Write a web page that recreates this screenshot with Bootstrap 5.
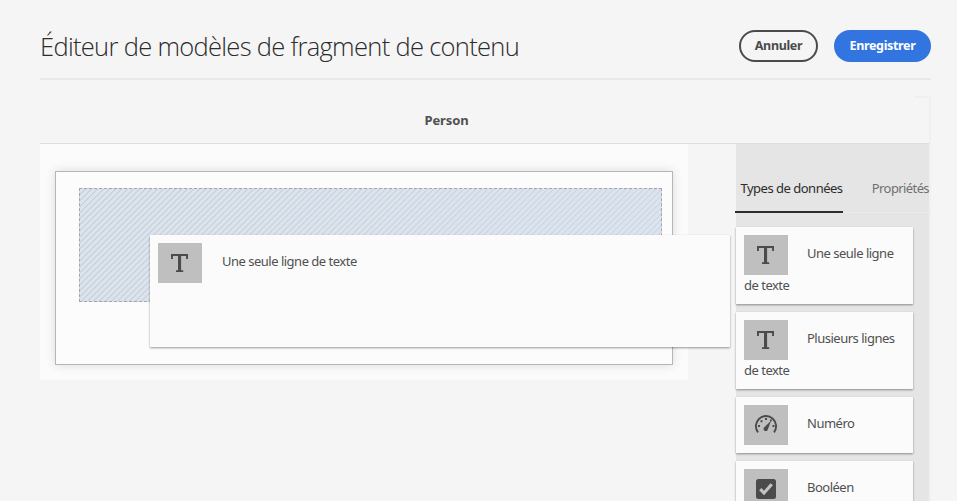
<!DOCTYPE html>
<html lang="fr">
<head>
<meta charset="utf-8">
<meta name="viewport" content="width=device-width, initial-scale=1">
<title>Éditeur de modèles de fragment de contenu</title>
<link href="https://cdn.jsdelivr.net/npm/bootstrap@5.3.0/dist/css/bootstrap.min.css" rel="stylesheet">
<style>
  body { background: #f5f5f5; color: #505050; font: 13px/20px "Noto Sans", "Open Sans", sans-serif; height: 501px; }
  .editor { width: 891px; height: 501px; margin-left: 40px; }
  .editor-header { height: 80px; padding-top: 14px; border-bottom: 2px solid #e9e9e9; }
  .editor-title { font-family: "Open Sans", "Noto Sans", sans-serif; font-size: 25.5px; font-weight: 300; line-height: 36px; color: #2c2c2c; letter-spacing: -.69px; }
  .btn-pill { height: 32px; border: 2px solid #4b4b4b; border-radius: 16px; font: 700 12.5px/28px "Noto Sans", sans-serif; letter-spacing: -.35px; color: #4b4b4b; padding: 0 0 2px; }
  .btn-cancel { width: 79px; }
  .btn-save { width: 97px; background: #3375e0; border-color: #3375e0; color: #fff; }
  .corner-rule { width: 17px; height: 2px; background: #f0f0f0; margin-top: 16px; }
  .work-area { border-right: 2px solid #f0f0f0; }
  .model-name { height: 46px; border-bottom: 1px solid #dedede; padding-right: 76px; font-weight: 700; line-height: 45px; letter-spacing: -.1px; }
  .canvas { width: 648px; height: 236px; background: #fbfbfb; padding: 27px 15px 15px; }
  .fragment { height: 194px; border: 1px solid #b5b5b5; background: #fcfcfc; padding: 16px 10px 0 23px; box-shadow: 0 0 10px rgba(0,0,0,.13); }
  .drop-zone { height: 114px; border: 1px dashed #a6a6a6; background: linear-gradient(135deg, #ced0d3 0 8.33%, #d9e4f0 8.34% 41.66%, #ced0d3 41.67% 58.33%, #d9e4f0 58.34% 91.66%, #ced0d3 91.67%) 0 0 / 6px 6px; }
  .tile { background: #fbfbfb; padding: 8px; box-shadow: 0 1px 2px rgba(0,0,0,.4); }
  .dragged { left: 70px; top: 46px; width: 580px; height: 112px; }
  .tile-icon { width: 44px; height: 40px; background: #bfbfbf; }
  .tile-icon svg { display: block; }
  .tile-label { margin-left: 20px; padding-top: 8px; letter-spacing: -.5px; white-space: nowrap; }
  .side .tile-label { margin-left: 19px; }
  .tile-more { line-height: 20px; margin-bottom: 1px; letter-spacing: -.5px; }
  .side { width: 193px; height: 357px; background: #e5e5e5; }
  .tab-row { height: 69px; border-bottom: 1px solid #ebebeb; padding-top: 34px; margin-bottom: 14px; white-space: nowrap; letter-spacing: -.5px; }
  .tab-on { width: 108px; height: 35px; margin-left: -1px; padding-left: 5.5px; border-bottom: 2px solid #2c2c2c; color: #2c2c2c; }
  .tab-off { margin-left: 29px; color: #707070; letter-spacing: -.6px; }
  .tile-list { width: 177px; }
  .drop-zone { background: repeating-linear-gradient(135deg, #d9e4f0 0 3.5px, #ced0d3 3.54px 4.243px); }
</style>
</head>
<body class="overflow-hidden">
<svg class="d-none" aria-hidden="true">
  <symbol id="i-text" viewBox="0 0 44 40"><path fill="#4b4b4b" d="M13 11H30V16H28.1V13H23.1V27.2H25.2V29H18V27.2H20V13H14.9V16H13Z"/></symbol>
  <symbol id="i-gauge" viewBox="0 0 44 40"><path fill="none" stroke="#4b4b4b" stroke-width="1.9" d="M14 27.3A10.1 10.1 0 1 1 30 27.3"/><path fill="#4b4b4b" d="M27.2 15.6L23.9 24.2A2.2 2.2 0 1 1 20.6 22ZM21 13h2v2h-2zM16.5 15.2h2v2h-2zM14 20h2v2h-2zM28.5 20h2v2h-2zM26 14.5h1.8v1.8H26z"/></symbol>
  <symbol id="i-check" viewBox="0 0 44 40"><rect x="12" y="10" width="20" height="20" rx="2.5" fill="#4b4b4b"/><path fill="none" stroke="#c3c3c3" stroke-width="3.2" d="M16.3 20.2L20 24L27.7 15.3"/></symbol>
</svg>
<main class="editor overflow-hidden">
  <header class="editor-header d-flex justify-content-between align-items-center">
    <h1 class="editor-title mb-0">Éditeur de modèles de fragment de contenu</h1>
    <div class="d-flex gap-3">
      <button class="btn btn-pill btn-cancel" type="button">Annuler</button>
      <button class="btn btn-pill btn-save" type="button">Enregistrer</button>
    </div>
  </header>
  <div class="corner-rule ms-auto"></div>
  <div class="work-area">
    <div class="model-name text-center">Person</div>
    <div class="d-flex justify-content-between align-items-start">
      <section class="canvas">
        <div class="fragment">
          <div class="drop-zone position-relative">
            <div class="tile dragged position-absolute d-flex align-items-start">
              <div class="tile-icon"><svg width="44" height="40"><use href="#i-text"/></svg></div>
              <div class="tile-label">Une seule ligne de texte</div>
            </div>
          </div>
        </div>
      </section>
      <aside class="side">
        <nav class="tab-row d-flex">
          <div class="tab-on">Types de données</div>
          <div class="tab-off">Propriétés</div>
        </nav>
        <div class="tile-list d-flex flex-column gap-2">
          <div class="tile">
            <div class="d-flex"><div class="tile-icon"><svg width="44" height="40"><use href="#i-text"/></svg></div><div class="tile-label">Une seule ligne</div></div>
            <div class="tile-more">de texte</div>
          </div>
          <div class="tile">
            <div class="d-flex"><div class="tile-icon"><svg width="44" height="40"><use href="#i-text"/></svg></div><div class="tile-label">Plusieurs lignes</div></div>
            <div class="tile-more">de texte</div>
          </div>
          <div class="tile">
            <div class="d-flex"><div class="tile-icon"><svg width="44" height="40"><use href="#i-gauge"/></svg></div><div class="tile-label">Numéro</div></div>
          </div>
          <div class="tile">
            <div class="d-flex"><div class="tile-icon"><svg width="44" height="40"><use href="#i-check"/></svg></div><div class="tile-label">Booléen</div></div>
          </div>
        </div>
      </aside>
    </div>
  </div>
</main>
<script src="https://cdn.jsdelivr.net/npm/bootstrap@5.3.0/dist/js/bootstrap.bundle.min.js"></script>
</body>
</html>
